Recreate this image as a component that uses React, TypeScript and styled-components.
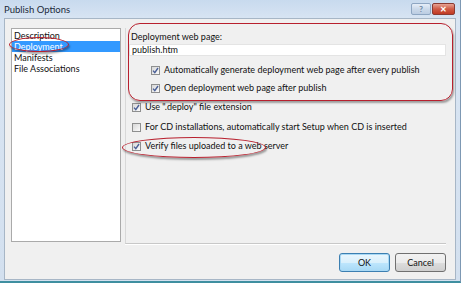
import React from "react";
import styled, { createGlobalStyle } from "styled-components";

const Global = createGlobalStyle`
  html, body { margin: 0; padding: 0; background: #d6e3f1; }
  body { font-family: Lato, "Noto Sans", sans-serif; }
`;

const Window = styled.div`
  position: relative;
  width: 461px;
  height: 283px;
  box-sizing: border-box;
  display: flex;
  flex-direction: column;
  background: linear-gradient(#c8daee, #d9e5f3 20px, #d3e0ef);
  border-bottom: 2px solid #3f8fa0;
  border-right: 1px solid #7d98b3;
  overflow: hidden;
`;

const TitleBar = styled.div`
  height: 18px;
  flex: none;
  display: flex;
  align-items: center;
  justify-content: space-between;
  padding: 0 5px 0 4px;
`;

const Title = styled.span`
  font-size: 9.5px;
  color: #1c2a3a;
`;

const Caps = styled.div`
  display: flex;
  gap: 1px;
  align-self: flex-start;
  margin-top: 3px;
`;

const CapBtn = styled.div<{ $danger?: boolean; $w: number }>`
  width: ${(p) => p.$w}px;
  height: 12px;
  border: 1px solid ${(p) => (p.$danger ? "#8a3a32" : "#8ea6c2")};
  border-radius: 2px;
  box-sizing: border-box;
  display: flex;
  align-items: center;
  justify-content: center;
  font-size: 8px;
  font-weight: bold;
  color: ${(p) => (p.$danger ? "#fff" : "#6c849f")};
  background: ${(p) =>
    p.$danger
      ? "linear-gradient(#e7a393, #cf5a45 50%, #c13a24)"
      : "linear-gradient(#e6eef8, #cbd9ea 50%, #bccde2)"};
`;

const Client = styled.div`
  flex: 1;
  margin: 0 4px 1px 4px;
  background: #f0f0f0;
  border: 1px solid #a7b6c6;
  display: flex;
  flex-direction: column;
  padding: 9px 9px 0 6px;
`;

const Body = styled.div`
  display: flex;
  gap: 4px;
  height: 216px;
`;

const ListBox = styled.div`
  width: 110px;
  height: 214px;
  box-sizing: border-box;
  background: #fff;
  border: 1px solid #aaaaaa;
  padding-top: 1px;
  display: flex;
  flex-direction: column;
`;

const ListItem = styled.div<{ $sel?: boolean }>`
  height: 11px;
  line-height: 11px;
  font-size: 9px;
  padding-left: 2px;
  color: ${(p) => (p.$sel ? "#fff" : "#111")};
  background: ${(p) => (p.$sel ? "#3399ff" : "transparent")};
  white-space: nowrap;
`;

const Panel = styled.div`
  flex: 1;
  height: 216px;
  box-sizing: border-box;
  border-left: 1px solid #d8d8d8;
  border-bottom: 1px solid #c8c8c8;
  box-shadow: 0 1px 0 #ffffff;
  padding: 2px 0 0 5px;
  display: flex;
  flex-direction: column;
`;

const Label = styled.div`
  font-size: 9px;
  color: #111;
  height: 12px;
  line-height: 12px;
  margin-top: 1px;
`;

const TextBox = styled.div`
  margin: 1px 0 0 -2px;
  height: 12px;
  box-sizing: border-box;
  background: #fff;
  border: 1px solid #e4e4e4;
  font-size: 9px;
  line-height: 10px;
  padding-left: 2px;
  color: #111;
`;

const CheckRow = styled.label<{ $indent?: number; $gap: number }>`
  display: flex;
  align-items: center;
  gap: 4px;
  margin-left: ${(p) => p.$indent ?? 0}px;
  margin-top: ${(p) => p.$gap}px;
  height: 12px;
  line-height: 12px;
  font-size: 9px;
  color: #111;
  white-space: nowrap;
`;

const Box = styled.span`
  width: 9px;
  height: 9px;
  flex: none;
  box-sizing: border-box;
  border: 1px solid #8e8f8f;
  background: linear-gradient(135deg, #d7d7d7, #fbfbfb);
  display: flex;
  align-items: center;
  justify-content: center;
`;

const Footer = styled.div`
  display: flex;
  justify-content: flex-end;
  gap: 5px;
  padding-top: 9px;
`;

const Button = styled.button`
  width: 51px;
  height: 19px;
  box-sizing: border-box;
  font-family: inherit;
  font-size: 9px;
  color: #111;
  border: 1px solid #707070;
  border-radius: 3px;
  background: linear-gradient(#f2f2f2, #ebebeb 50%, #dddddd 51%, #cfcfcf);
  padding: 0;
`;

const DefaultButton = styled(Button)`
  border-color: #3c7fb1;
  box-shadow: inset 0 0 0 1px #a9d9f5;
  background: linear-gradient(#eaf6fd, #d9f0fc 50%, #bee6fd 51%, #a7d9f5);
`;

const Mark = styled.div<{ $l: number; $t: number; $w: number; $h: number; $r: string }>`
  position: absolute;
  left: ${(p) => p.$l}px;
  top: ${(p) => p.$t}px;
  width: ${(p) => p.$w}px;
  height: ${(p) => p.$h}px;
  box-sizing: border-box;
  border: 1.5px solid #b8202e;
  border-radius: ${(p) => p.$r};
  box-shadow: 1px 2px 2px rgba(0, 0, 0, 0.35);
  pointer-events: none;
`;

const Tick = () => (
  <svg width="7" height="7" viewBox="0 0 7 7">
    <path d="M1 3.6 L2.8 5.6 L6 1" fill="none" stroke="#4a5f97" strokeWidth="1.4" />
  </svg>
);

const Check = ({ checked, text, indent, gap }: { checked: boolean; text: string; indent?: number; gap: number }) => (
  <CheckRow $indent={indent} $gap={gap}>
    <Box>{checked && <Tick />}</Box>
    {text}
  </CheckRow>
);

export default function App() {
  return (
    <>
      <Global />
      <Window>
        <TitleBar>
          <Title>Publish Options</Title>
          <Caps>
            <CapBtn $w={20}>?</CapBtn>
            <CapBtn $w={23} $danger>✕</CapBtn>
          </Caps>
        </TitleBar>
        <Client>
          <Body>
            <ListBox>
              <ListItem>Description</ListItem>
              <ListItem $sel>Deployment</ListItem>
              <ListItem>Manifests</ListItem>
              <ListItem>File Associations</ListItem>
            </ListBox>
            <Panel>
              <Label>Deployment web page:</Label>
              <TextBox>publish.htm</TextBox>
              <Check checked indent={20} gap={8} text="Automatically generate deployment web page after every publish" />
              <Check checked indent={20} gap={6} text="Open deployment web page after publish" />
              <Check checked indent={1} gap={7} text={'Use ".deploy" file extension'} />
              <Check checked={false} indent={1} gap={8} text="For CD installations, automatically start Setup when CD is inserted" />
              <Check checked indent={1} gap={7} text="Verify files uploaded to a web server" />
            </Panel>
          </Body>
          <Footer>
            <DefaultButton>OK</DefaultButton>
            <Button>Cancel</Button>
          </Footer>
        </Client>
        <Mark $l={9} $t={37} $w={60} $h={15} $r="50%" />
        <Mark $l={128} $t={23} $w={325} $h={78} $r="12px" />
        <Mark $l={122} $t={137} $w={144} $h={21} $r="50%" />
      </Window>
    </>
  );
}
